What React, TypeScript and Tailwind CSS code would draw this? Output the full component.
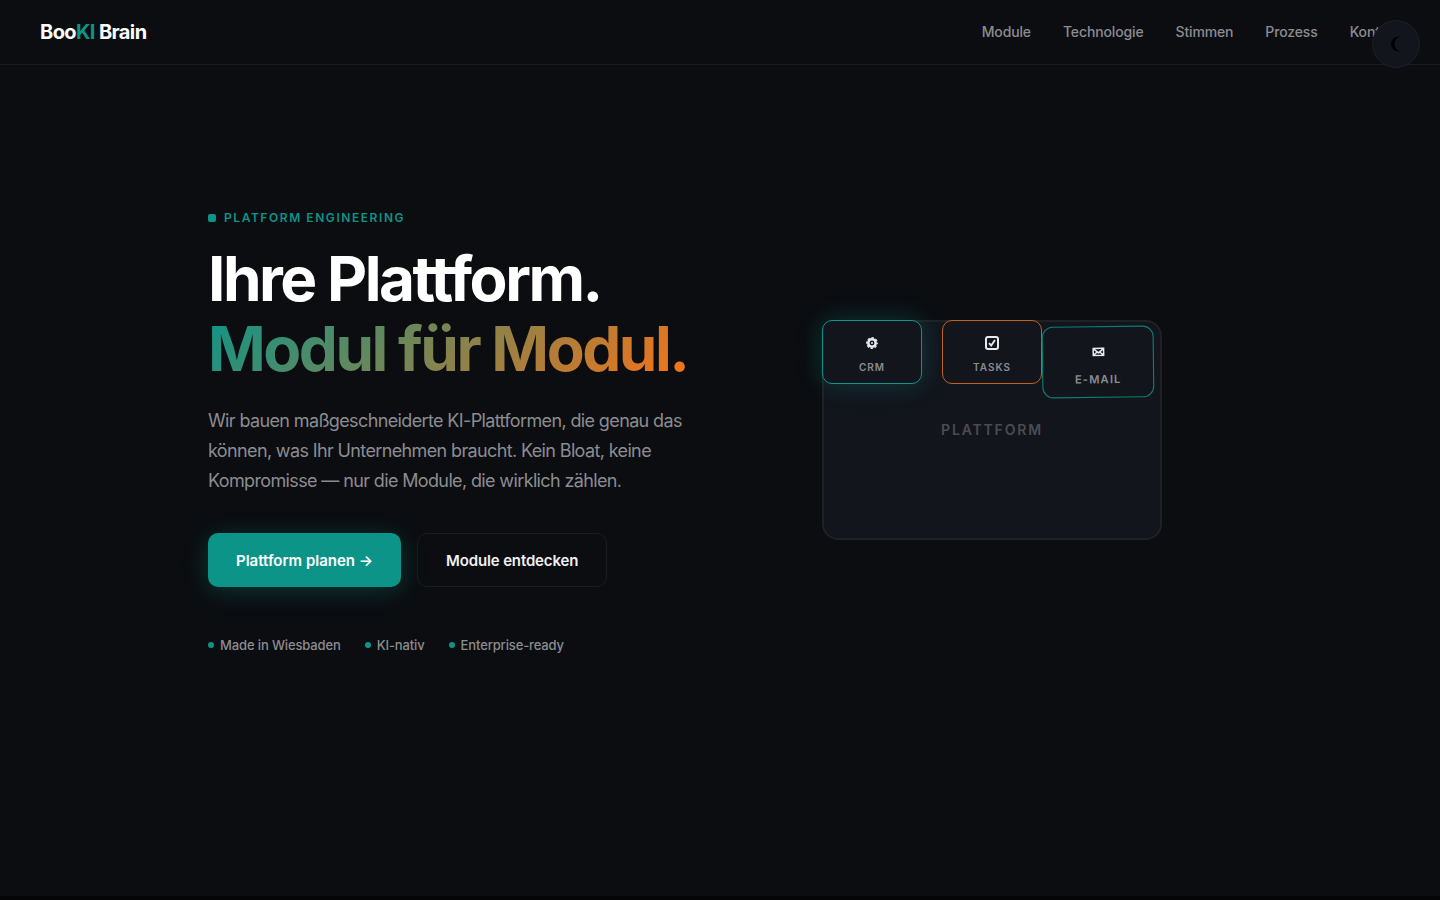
import type { ReactNode } from "react";

const links = [
  { href: "#module", label: "Module" },
  { href: "#technologie", label: "Technologie" },
  { href: "#stimmen", label: "Stimmen" },
  { href: "#prozess", label: "Prozess" },
  { href: "#kontakt", label: "Kontakt" },
];

const trust = ["Made in Wiesbaden", "KI-nativ", "Enterprise-ready"];

function Nav() {
  return (
    <header className="flex h-[65px] items-center justify-between border-b border-[#1b1c20] px-10">
      <a href="#top" className="text-xl font-bold tracking-[-0.03em] text-white">
        Boo<span className="text-[#0d9488]">KI</span> Brain
      </a>
      <nav className="flex gap-8 text-sm font-medium tracking-[-0.01em] text-[#8b8c90]">
        {links.map((link) => (
          <a key={link.href} href={link.href}>
            {link.label}
          </a>
        ))}
      </nav>
    </header>
  );
}

function ThemeToggle() {
  return (
    <button
      type="button"
      aria-label="Theme wechseln"
      className="fixed top-5 right-5 flex size-12 cursor-pointer items-center justify-center rounded-full border border-[#1e2026] bg-[#12151c] text-black"
    >
      <svg width="10" height="16" viewBox="0 0 10 16" fill="currentColor">
        <path d="M9.5.6A7.6 7.6 0 1 0 9.5 15.4 7.6 7.6 0 0 1 9.5.6Z" />
      </svg>
    </button>
  );
}

function ModuleCard({
  icon,
  label,
  className,
}: {
  icon: ReactNode;
  label: string;
  className: string;
}) {
  return (
    <div
      className={`absolute flex h-16 w-[100px] flex-col items-center justify-center gap-1 rounded-[10px] border bg-[#12151c] pt-0.5 ${className}`}
    >
      <span className="flex h-6 items-center text-[#e8eaed]">{icon}</span>
      <span className="text-[10px] leading-4 font-semibold tracking-[0.1em] text-[#8b8c90]">{label}</span>
    </div>
  );
}

function GearIcon() {
  return (
    <svg width="12" height="12" viewBox="0 0 24 24" fill="none" stroke="currentColor">
      <circle cx="12" cy="12" r="7.4" strokeWidth="5" />
      <circle cx="12" cy="12" r="10.6" strokeWidth="2.4" strokeDasharray="5 3.325" strokeDashoffset="2.5" />
      <circle cx="12" cy="12" r="2" fill="currentColor" stroke="none" />
    </svg>
  );
}

function CheckIcon() {
  return (
    <svg width="14" height="14" viewBox="0 0 14 14" fill="none" stroke="currentColor">
      <rect x="1" y="1" width="12" height="12" rx="2" strokeWidth="2" />
      <path d="M4 7.2 6.2 9.5 10 4" strokeWidth="1.9" />
    </svg>
  );
}

function MailIcon() {
  return (
    <svg width="11" height="8" viewBox="0 0 22 16">
      <rect width="22" height="16" fill="currentColor" />
      <path
        d="M5 3H17L11 7.5ZM3 5 7 8 3 11ZM19 5 15 8 19 11ZM5 13 8.5 10 11 11.5 13.5 10 17 13Z"
        fill="#12151c"
      />
    </svg>
  );
}

function PlatformVisual() {
  return (
    <div className="relative flex h-[220px] w-[340px] items-center justify-center rounded-2xl border-2 border-[#1f2126] bg-[#12151c]">
      <span className="text-sm font-semibold tracking-[0.13em] text-[#4a4c52]">PLATTFORM</span>
      <ModuleCard
        icon={<GearIcon />}
        label="CRM"
        className="-top-0.5 -left-0.5 border-[#0d9488] shadow-[0_0_24px_rgba(13,148,136,0.3)]"
      />
      <ModuleCard icon={<CheckIcon />} label="TASKS" className="-top-0.5 left-[118px] border-[#c2621b]" />
      <ModuleCard
        icon={<MailIcon />}
        label="E-MAIL"
        className="top-2 left-[224px] scale-[1.12] rotate-[-0.7deg] border-[#0d7d74]"
      />
    </div>
  );
}

function Hero() {
  return (
    <section className="mx-auto grid w-full max-w-[1024px] grid-cols-2 items-center gap-16">
      <div>
        <p className="flex items-center gap-2 text-xs leading-5 font-semibold tracking-[0.13em] text-[#0d9488]">
          <span className="size-2 rounded-xs bg-[#0d9488]" />
          PLATFORM ENGINEERING
        </p>
        <h1 className="mt-4 text-[62px] leading-[70px] font-bold tracking-[-0.04em] whitespace-nowrap text-white">
          Ihre Plattform.
          <br />
          <span className="bg-[linear-gradient(135deg,#0d9488,#f97316)] bg-clip-text text-transparent">
            Modul für Modul.
          </span>
        </h1>
        <p className="mt-[22px] text-lg leading-[30px] tracking-[-0.035em] text-[#8b8c90]">
          Wir bauen maßgeschneiderte KI-Plattformen, die genau das können, was Ihr Unternehmen braucht. Kein
          Bloat, keine Kompromisse — nur die Module, die wirklich zählen.
        </p>
        <div className="mt-[37px] flex gap-4">
          <button
            type="button"
            className="h-[54px] cursor-pointer rounded-[10px] bg-[#0d9488] px-7 pt-0.5 text-[15px] leading-6 font-semibold text-white shadow-[0_4px_24px_rgba(13,148,136,0.3)]"
          >
            Plattform planen →
          </button>
          <button
            type="button"
            className="h-[54px] cursor-pointer rounded-[10px] border border-[#1b1c20] px-7 pt-0.5 text-[15px] leading-6 font-semibold tracking-[-0.01em] text-[#f0f0f2]"
          >
            Module entdecken
          </button>
        </div>
        <ul className="mt-12 flex gap-6 text-[13px] leading-5 font-medium tracking-[-0.01em] text-[#8b8c90]">
          {trust.map((item) => (
            <li key={item} className="flex items-center gap-1.5">
              <span className="size-1.5 rounded-full bg-[#0d9488]" />
              {item}
            </li>
          ))}
        </ul>
      </div>
      <div className="flex justify-center pb-1">
        <PlatformVisual />
      </div>
    </section>
  );
}

export default function App() {
  return (
    <div id="top" className="min-h-screen bg-[#050507] pb-1 font-['Inter',sans-serif] antialiased">
      <div className="flex min-h-[calc(100vh-4px)] flex-col bg-[#0b0d11]">
        <Nav />
        <main className="flex flex-1 items-center pb-[98px]">
          <Hero />
        </main>
      </div>
      <ThemeToggle />
    </div>
  );
}
